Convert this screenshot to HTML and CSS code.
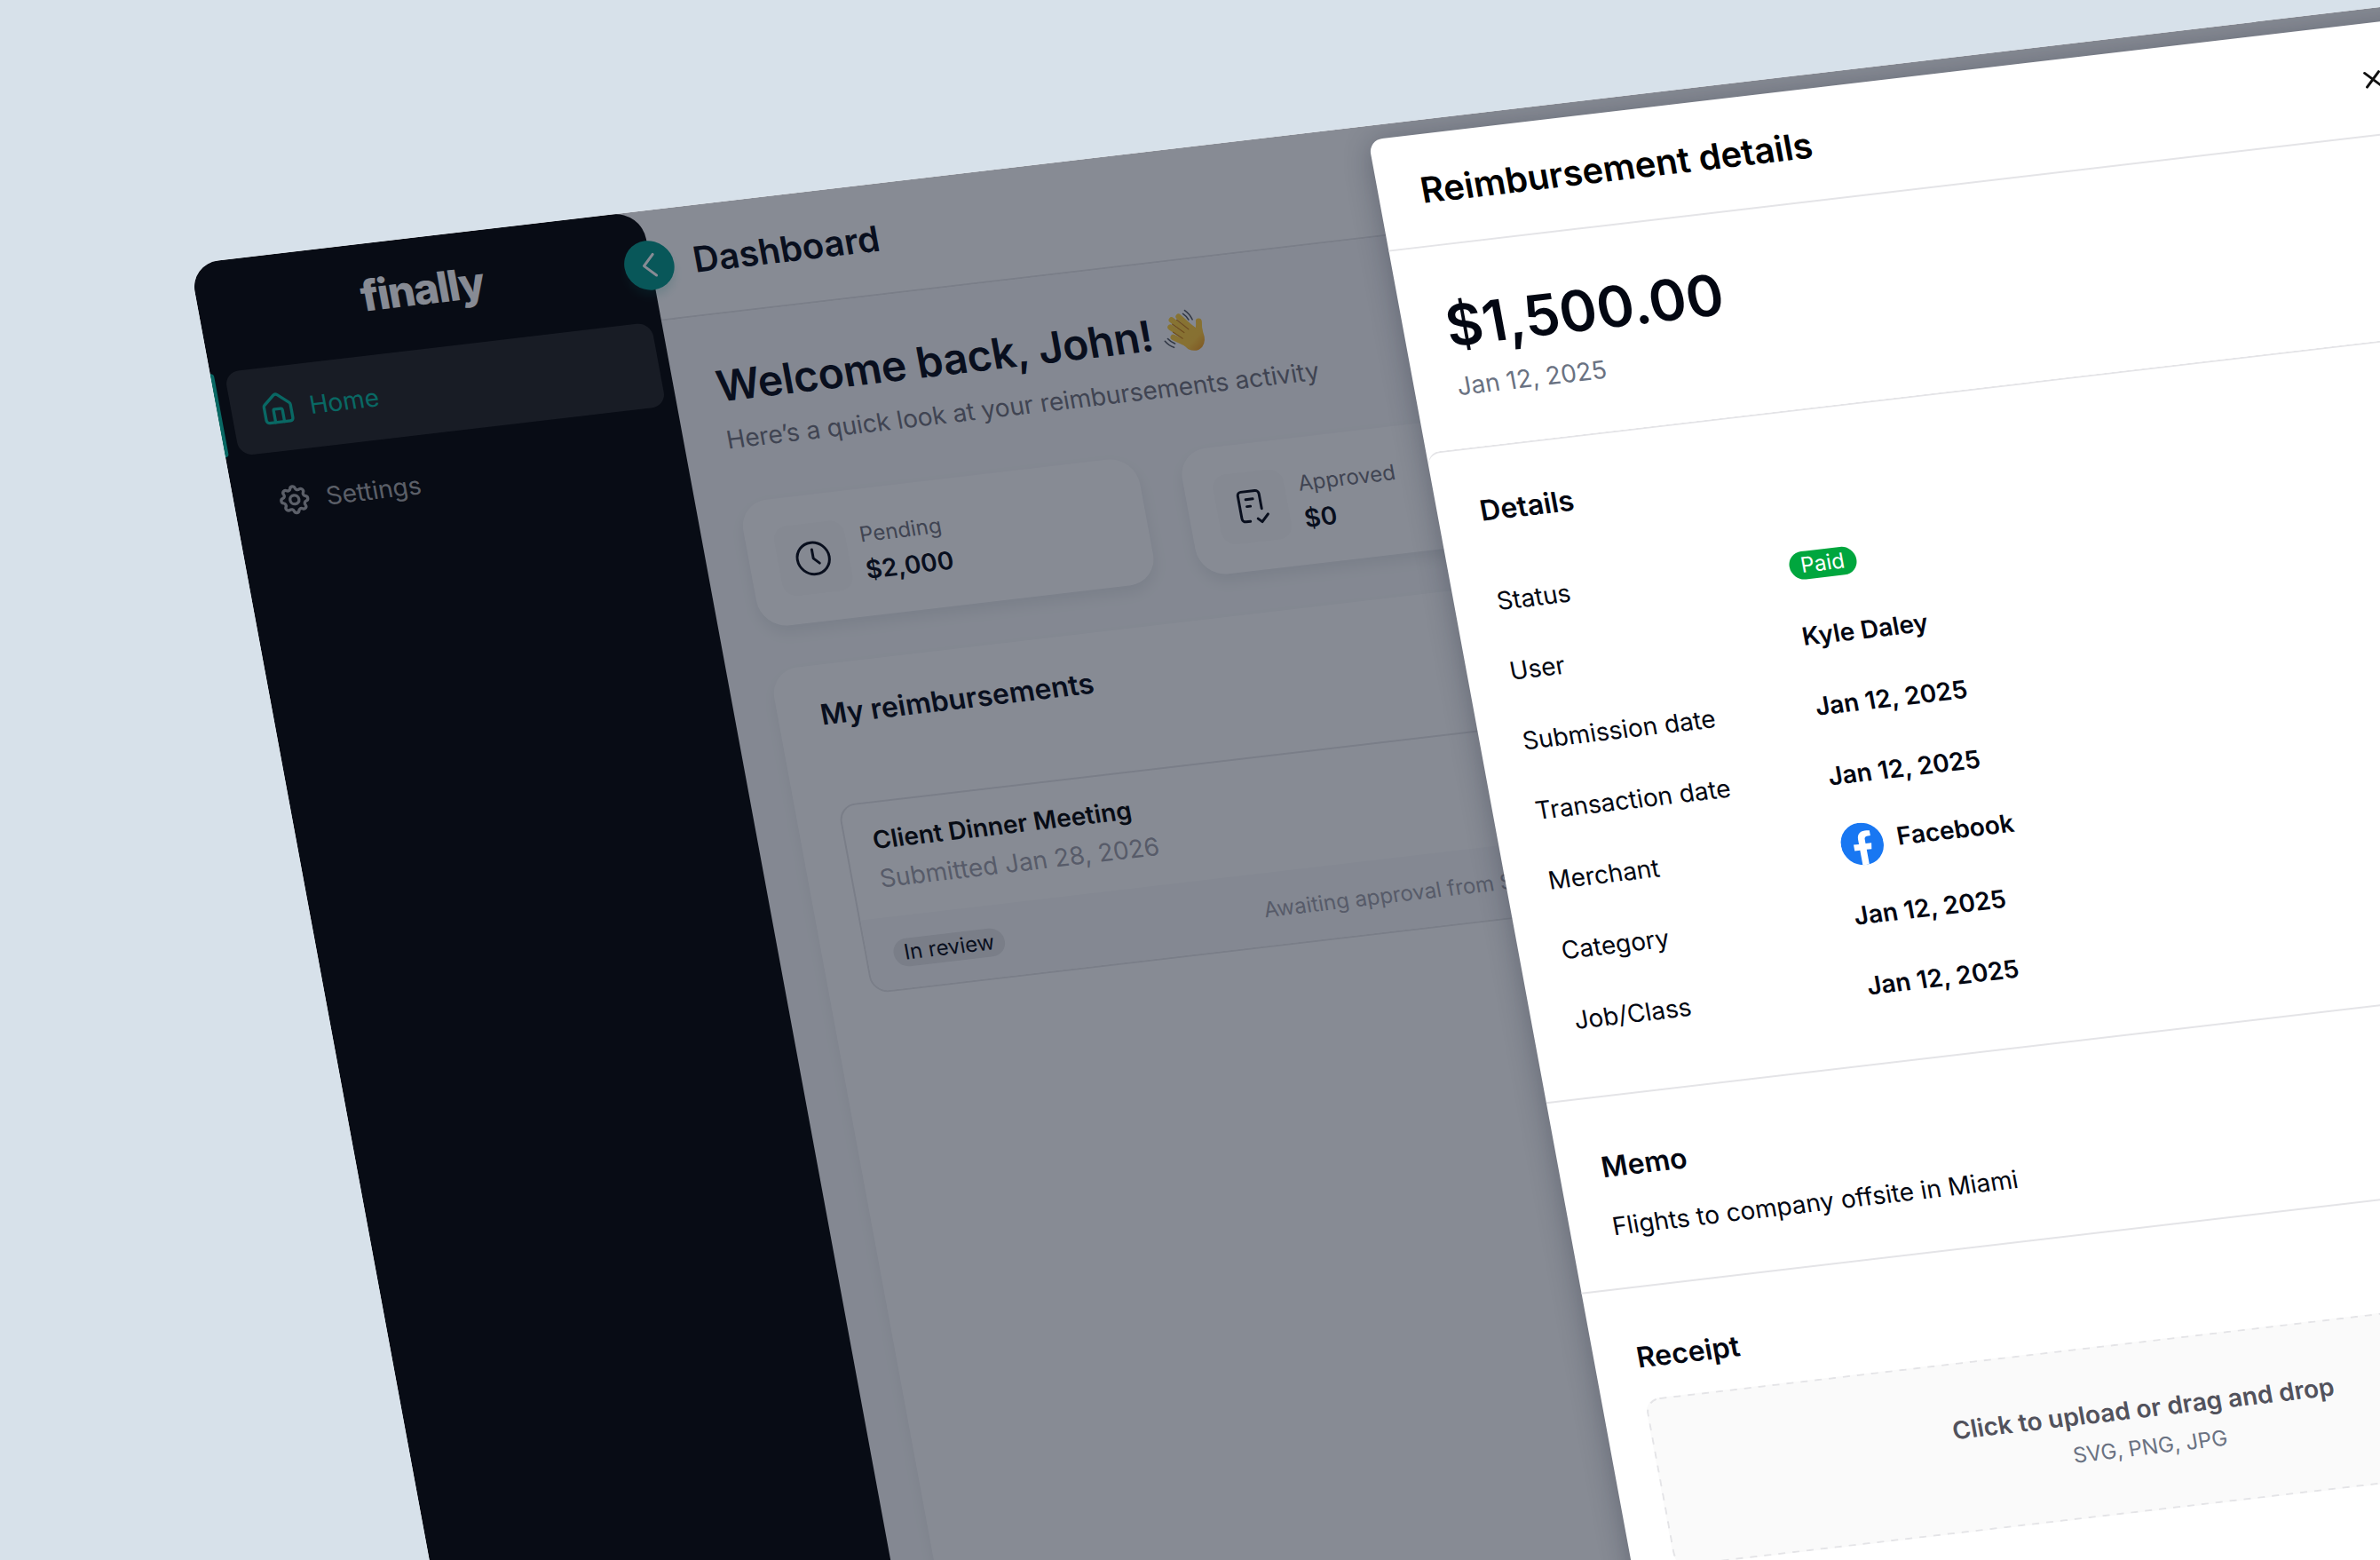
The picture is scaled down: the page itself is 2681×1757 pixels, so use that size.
FILE: index.html
```html
<!DOCTYPE html>
<html lang="en">
<head>
    <meta charset="UTF-8">
    <meta name="viewport" content="width=device-width, initial-scale=1.0">
    <title>finally - Dashboard</title>
    <link rel="stylesheet" href="styles.css">
</head>
<body>
    <div class="app">
        <aside class="sidebar">
            <div class="logo">finally</div>
            <nav class="nav">
                <a class="nav-item active">
                    <svg class="nav-icon" viewBox="0 0 24 24"><path d="M15 21v-8a1 1 0 0 0-1-1h-4a1 1 0 0 0-1 1v8"/><path d="M3 10a2 2 0 0 1 .709-1.528l7-5.999a2 2 0 0 1 2.582 0l7 5.999A2 2 0 0 1 21 10v9a2 2 0 0 1-2 2H5a2 2 0 0 1-2-2z"/></svg>
                    Home
                </a>
                <a class="nav-item">
                    <svg class="nav-icon" viewBox="0 0 24 24"><path d="M10.325 4.317c.426-1.756 2.924-1.756 3.35 0a1.724 1.724 0 0 0 2.573 1.066c1.543-.94 3.31.826 2.37 2.37a1.724 1.724 0 0 0 1.065 2.572c1.756.426 1.756 2.924 0 3.35a1.724 1.724 0 0 0-1.066 2.573c.94 1.543-.826 3.31-2.37 2.37a1.724 1.724 0 0 0-2.572 1.065c-.426 1.756-2.924 1.756-3.35 0a1.724 1.724 0 0 0-2.573-1.066c-1.543.94-3.31-.826-2.37-2.37a1.724 1.724 0 0 0-1.065-2.572c-1.756-.426-1.756-2.924 0-3.35a1.724 1.724 0 0 0 1.066-2.573c-.94-1.543.826-3.31 2.37-2.37 1 .608 2.296.07 2.572-1.065z"/><circle cx="12" cy="12" r="3"/></svg>
                    Settings
                </a>
            </nav>
            <button class="collapse">
                <svg viewBox="0 0 24 24"><path d="M15 6l-6 6l6 6"/></svg>
            </button>
        </aside>

        <main class="main">
            <header class="topbar">Dashboard</header>
            <div class="content">
                <h1 class="welcome">
                    Welcome back, John!
                    <svg class="wave" viewBox="0 0 28 28">
                        <defs>
                            <linearGradient id="skin" gradientUnits="userSpaceOnUse" x1="6" y1="6" x2="22" y2="26">
                                <stop offset="0" stop-color="#ffd03c"/>
                                <stop offset="0.7" stop-color="#ffc93a"/>
                                <stop offset="1" stop-color="#ee961c"/>
                            </linearGradient>
                        </defs>
                        <g class="fingers" stroke="url(#skin)">
                            <path d="M6.600 16.800l6 4"/>
                            <path d="M6 11l8 7"/>
                            <path d="M7.400 7l8 8.500"/>
                            <path d="M11.600 5.600l7.400 9"/>
                            <path d="M22.300 9.400l-.8 7"/>
                        </g>
                        <path fill="url(#skin)" d="M9.500 19.500L17.800 10.700L19.900 12.800Q20.600 11 21 8.800L23.900 9.500Q23 13 23.600 16.200Q24.600 21 21.600 24Q18 27 13.600 24.400Z"/>
                        <path class="creases" d="M7 13.900l4.600 4.100M7.400 9.400l5.600 5.400M10.200 7.200l5.600 6"/>
                        <path class="motion" d="M15.600 2.400q2.400 2.200 3.300 5.600M14.300 4.200q1.700 1.500 2.500 3.700M3.300 17.200q1.300 2 3.500 3.200M1.500 18.400q1.700 2.800 4.400 4.100"/>
                    </svg>
                </h1>
                <p class="subtitle">Here’s a quick look at your reimbursements activity</p>

                <div class="stats">
                    <div class="stat">
                        <div class="stat-icon">
                            <svg viewBox="0 0 24 24"><circle cx="12" cy="12" r="9"/><path d="M12 7v5l3 3"/></svg>
                        </div>
                        <div class="stat-text">
                            <span class="stat-label">Pending</span>
                            <span class="stat-value">$2,000</span>
                        </div>
                    </div>
                    <div class="stat">
                        <div class="stat-icon">
                            <svg viewBox="0 0 24 24"><path d="M9.500 20H7a2 2 0 0 1-2-2V5a2 2 0 0 1 2-2h8a2 2 0 0 1 2 2v8.500M9 7.500h4M9 11.500h2M14 19l2 2l4-4"/></svg>
                        </div>
                        <div class="stat-text">
                            <span class="stat-label">Approved</span>
                            <span class="stat-value">$0</span>
                        </div>
                    </div>
                    <div class="stat"></div>
                    <div class="stat"></div>
                </div>

                <section class="reimbursements">
                    <h2>My reimbursements</h2>
                    <div class="item">
                        <div class="item-body">
                            <strong>Client Dinner Meeting</strong>
                            <span>Submitted Jan 28, 2026</span>
                        </div>
                        <div class="item-footer">
                            <span class="badge">In review</span>
                            <span class="note">Awaiting approval from S</span>
                        </div>
                    </div>
                </section>
            </div>
        </main>

        <div class="overlay"></div>

        <div class="drawer">
            <header class="drawer-header">
                <h2>Reimbursement details</h2>
                <svg class="close" viewBox="0 0 24 24"><path d="M18 6L6 18M6 6l12 12"/></svg>
            </header>
            <div class="amount-box">
                <div class="amount">$1,500.00</div>
                <div class="date">Jan 12, 2025</div>
            </div>
            <section class="section details">
                <h3>Details</h3>
                <dl>
                    <dt>Status</dt><dd><span class="badge paid">Paid</span></dd>
                    <dt>User</dt><dd>Kyle Daley</dd>
                    <dt>Submission date</dt><dd>Jan 12, 2025</dd>
                    <dt>Transaction date</dt><dd>Jan 12, 2025</dd>
                    <dt>Merchant</dt>
                    <dd class="merchant">
                        <svg viewBox="0 0 24 24"><circle cx="12" cy="12" r="12" fill="#1877f2"/><path fill="#fff" d="M16.671 15.469l.532-3.469h-3.328V9.749c0-.949.465-1.874 1.956-1.874h1.513V4.922s-1.373-.234-2.686-.234c-2.741 0-4.533 1.661-4.533 4.669V12H7.078v3.469h3.047v8.385a12.090 12.090 0 0 0 3.750 0v-8.385h2.796z"/></svg>
                        <span>Facebook</span>
                    </dd>
                    <dt>Category</dt><dd>Jan 12, 2025</dd>
                    <dt>Job/Class</dt><dd>Jan 12, 2025</dd>
                </dl>
            </section>
            <section class="section">
                <h3>Memo</h3>
                <p class="memo">Flights to company offsite in Miami</p>
            </section>
            <section class="section">
                <h3>Receipt</h3>
                <div class="dropzone">
                    <svg class="dropzone-border"><rect x="0.5" y="0.5" width="551" height="95" rx="8"/></svg>
                    <strong>Click to upload or drag and drop</strong>
                    <span>SVG, PNG, JPG</span>
                </div>
            </section>
        </div>
    </div>
</body>
</html>
```
FILE: styles.css
```css
* {
    box-sizing: border-box;
}

html, body {
    margin: 0;
    height: 100%;
    overflow: hidden;
}

body {
    background: #d7e1ea;
    font-family: 'Inter', sans-serif;
    font-size: 14px;
    line-height: 20px;
    color: #030712;
}

h1, h2, h3, p, dl, dd {
    margin: 0;
}

svg {
    fill: none;
    stroke: currentColor;
    stroke-width: 1.5;
    stroke-linecap: round;
    stroke-linejoin: round;
}

/* The whole app is tilted and scaled up as one surface */
.app {
    position: relative;
    display: flex;
    width: 1275px;
    height: 1000px;
    background: #fff;
    border-radius: 16px 0 0 0;
    overflow: hidden;
    transform-origin: 0 0;
    transform: matrix(1.986, -0.2328, 0.3638, 1.9666, 213.7, 297.3);
}

/* Sidebar */
.sidebar {
    position: relative;
    z-index: 1;
    width: 256px;
    background: #000;
    border-radius: 16px 16px 0 0;
}

.logo {
    height: 63px;
    padding: 13px 3px 0 0;
    font-size: 24px;
    line-height: 34px;
    font-weight: 800;
    letter-spacing: -0.8px;
    text-align: center;
    color: #fff;
}

.nav {
    display: flex;
    flex-direction: column;
    gap: 4px;
    padding: 0 6.5px 0 8px;
}

.nav-item {
    position: relative;
    display: flex;
    align-items: center;
    gap: 8px;
    height: 48px;
    padding: 0 16px;
    border-radius: 8px;
    color: #a6a6a6;
}

.nav-item.active {
    background: #212121;
    color: #02b99f;
}

.nav-item.active::before {
    content: "";
    position: absolute;
    left: -8px;
    top: 0;
    width: 2px;
    height: 48px;
    border-radius: 0 2px 2px 0;
    background: #02b99f;
}

.nav-icon {
    width: 20px;
    height: 20px;
    stroke-width: 2;
}

.collapse {
    position: absolute;
    top: 17px;
    right: -13px;
    display: flex;
    align-items: center;
    justify-content: center;
    width: 28px;
    height: 28px;
    padding: 0;
    border: none;
    border-radius: 50%;
    background: #009689;
    color: #fff;
    box-shadow: 0 4px 6px -1px rgba(0, 150, 137, 0.2);
}

.collapse svg {
    width: 24px;
    height: 24px;
}

/* Main area */
.main {
    flex: 1;
    margin-left: -20px;
    padding-left: 20px;
    display: flex;
    flex-direction: column;
}

.topbar {
    height: 63px;
    padding: 0 24px;
    border-bottom: 1px solid #e4e4e7;
    font-size: 20px;
    font-weight: 600;
    line-height: 63px;
    color: #030712;
}

.content {
    flex: 1;
    padding: 24px;
    background: #f8f9fa;
}

.welcome {
    display: flex;
    align-items: center;
    gap: 5px;
    height: 34px;
    font-size: 24px;
    font-weight: 600;
    letter-spacing: -0.13px;
}

.wave {
    width: 28px;
    height: 28px;
    margin-top: -2px;
    stroke: none;
}

.fingers {
    stroke-width: 3.3;
}

.creases {
    stroke: #c97d10;
    stroke-width: 0.6;
}

.motion {
    stroke: #50555f;
    stroke-width: 0.8;
}

.subtitle {
    margin: 3px 0 26px;
    letter-spacing: -0.03px;
    color: #71717b;
}

.stats {
    display: grid;
    grid-template-columns: repeat(4, 1fr);
    gap: 24px;
}

.stat {
    display: flex;
    gap: 8px;
    height: 72px;
    padding: 16px;
    border-radius: 16px;
    background: #fff;
    box-shadow: 0 4px 8px rgba(15, 23, 42, 0.08);
}

.stat-icon {
    display: flex;
    align-items: center;
    justify-content: center;
    width: 40px;
    height: 40px;
    border-radius: 8px;
    background: #fafafa;
}

.stat-icon svg {
    width: 24px;
    height: 24px;
}

.stat-text {
    display: flex;
    flex-direction: column;
    gap: 1.5px;
    padding-top: 2px;
}

.stat-label {
    font-size: 12px;
    line-height: 16px;
    color: #71717b;
}

.stat-value {
    font-weight: 600;
}

.reimbursements {
    height: 800px;
    margin-top: 24px;
    padding: 16px 24px;
    border-radius: 16px;
    background: #fff;
    box-shadow: 0 4px 8px rgba(15, 23, 42, 0.06);
}

.reimbursements h2 {
    height: 64px;
    font-size: 16px;
    line-height: 24px;
    font-weight: 600;
}

.item {
    height: 108px;
    border: 1px solid #e4e4e7;
    border-radius: 10px;
    overflow: hidden;
}

.item-body {
    display: flex;
    flex-direction: column;
    gap: 2px;
    height: 65px;
    padding: 11px 15px;
}

.item-body strong {
    font-weight: 600;
    color: #000;
}

.item-body span {
    color: #9f9fa9;
}

.item-footer {
    display: grid;
    grid-template-columns: 210px 1fr;
    align-items: center;
    height: 42px;
    padding: 0 15px;
    background: #f8f9fa;
}

.badge {
    width: fit-content;
    height: 16px;
    padding: 0 6px;
    border-radius: 8px;
    background: #e4e4e7;
    font-size: 12px;
    line-height: 16px;
}

.note {
    font-size: 12px;
    color: #9f9fa9;
}

.overlay {
    position: absolute;
    inset: 0;
    z-index: 2;
    background: rgba(15, 23, 42, 0.5);
}

/* Drawer */
.drawer {
    position: absolute;
    top: 8px;
    left: 667px;
    z-index: 3;
    width: 600px;
    height: 980px;
    border-radius: 8px;
    background: #fff;
    box-shadow: 0 2px 16px rgba(15, 23, 42, 0.3);
}

.drawer-header {
    display: flex;
    align-items: center;
    justify-content: space-between;
    height: 64px;
    padding: 0 28px 0 24px;
    border-bottom: 1px solid #e4e4e7;
}

.drawer-header h2 {
    font-size: 20px;
    font-weight: 600;
    color: #000;
}

.close {
    width: 16px;
    height: 16px;
    color: #111;
    stroke-width: 2.2;
}

.amount-box {
    padding: 24.5px 24px 25px;
}

.amount {
    font-size: 32px;
    line-height: 42px;
    font-weight: 600;
}

.date {
    margin-top: 3.5px;
    color: #6a7282;
}

.section {
    padding: 27px 24px 24px;
    border-top: 1px solid #e4e4e7;
}

.section h3 {
    font-size: 16px;
    line-height: 24px;
    font-weight: 600;
}

.details {
    padding: 23px 24px 24.5px;
    border-radius: 8px 8px 0 0;
}

.details dl {
    display: grid;
    grid-template-columns: 166px 1fr;
    grid-auto-rows: 40px;
    align-items: center;
    margin-top: 19.5px;
}

.details dd {
    font-weight: 600;
}

.badge.paid {
    display: block;
    padding: 0 6.5px;
    background: #00a63e;
    color: #fff;
    font-weight: 400;
}

.merchant {
    display: flex;
    gap: 8px;
}

.merchant svg {
    width: 24px;
    height: 24px;
    stroke: none;
}

.memo {
    margin-top: 9.5px;
    margin-bottom: -0.5px;
    line-height: 24px;
}

.dropzone {
    position: relative;
    display: flex;
    flex-direction: column;
    align-items: center;
    justify-content: center;
    gap: 2px;
    height: 96px;
    margin-top: 11.5px;
    padding-top: 2px;
    border-radius: 8px;
    background: #fafafa;
}

/* Longer dashes than a dashed border gives */
.dropzone-border {
    position: absolute;
    inset: 0;
    width: 100%;
    height: 100%;
    stroke: #e4e4e7;
    stroke-width: 1;
    stroke-linecap: butt;
    stroke-dasharray: 4 4;
}

.dropzone strong {
    font-weight: 600;
    color: #52525c;
}

.dropzone span {
    font-size: 12px;
    color: #6a7282;
}
```
